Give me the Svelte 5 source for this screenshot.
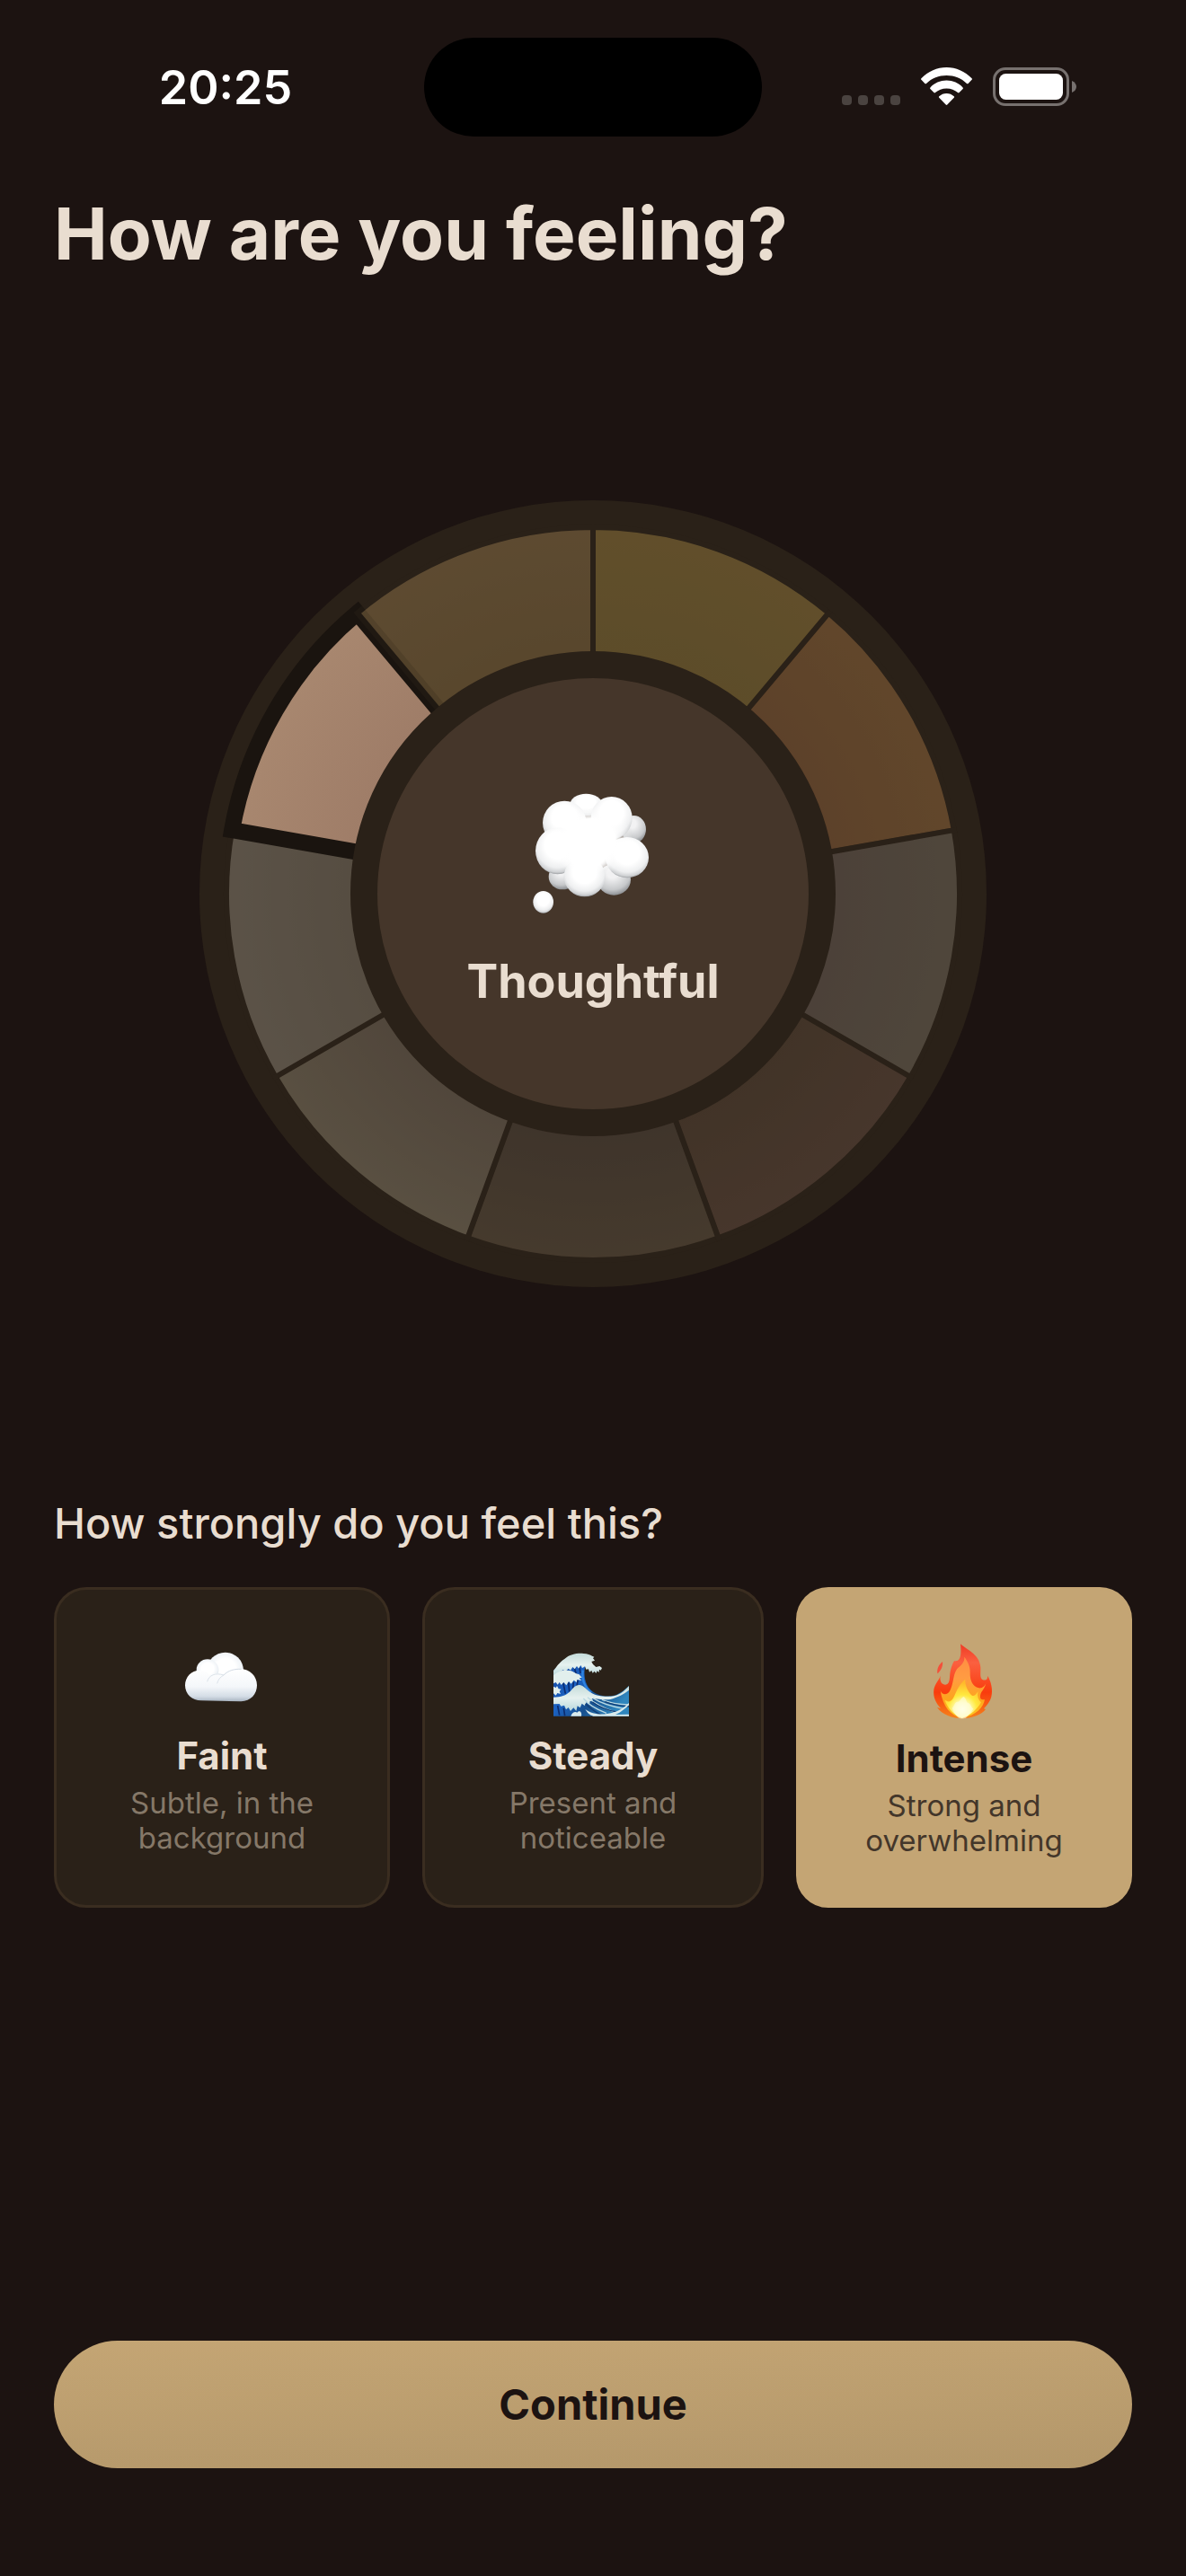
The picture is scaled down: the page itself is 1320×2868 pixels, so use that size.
<script lang="ts">
  type Point = { x: number; y: number };
  type Segment = { name: string; inner: string; outer: string };

  const CENTER = 438;
  const OUTER_RADIUS = 408;
  const INNER_RADIUS = 255;
  const SWEEP = 40;

  const segments: Segment[] = [
    { name: 'joyful', inner: '#a98e44', outer: '#b49348' },
    { name: 'excited', inner: '#aa7346', outer: '#b47f48' },
    { name: 'anxious', inner: '#7f726b', outer: '#877f70' },
    { name: 'angry', inner: '#65503f', outer: '#73574a' },
    { name: 'sad', inner: '#5f5248', outer: '#70614e' },
    { name: 'tired', inner: '#8c7f71', outer: '#a09680' },
    { name: 'calm', inner: '#988f80', outer: '#a59d8f' },
    { name: 'thoughtful', inner: '#9f7d68', outer: '#a8876f' },
    { name: 'grateful', inner: '#9f804d', outer: '#aa8957' }
  ];
  const selectedMood = 'thoughtful';

  const options = [
    { id: 'faint', title: 'Faint', lines: ['Subtle, in the', 'background'] },
    { id: 'steady', title: 'Steady', lines: ['Present and', 'noticeable'] },
    { id: 'intense', title: 'Intense', lines: ['Strong and', 'overwhelming'] }
  ];
  let strength = $state('intense');

  function polar(radius: number, degrees: number): Point {
    const a = (degrees * Math.PI) / 180;
    return { x: CENTER + radius * Math.sin(a), y: CENTER - radius * Math.cos(a) };
  }

  function wedge(index: number): string {
    const a = polar(INNER_RADIUS, index * SWEEP);
    const b = polar(OUTER_RADIUS, index * SWEEP);
    const c = polar(OUTER_RADIUS, (index + 1) * SWEEP);
    const d = polar(INNER_RADIUS, (index + 1) * SWEEP);
    return `M${a.x} ${a.y} L${b.x} ${b.y} A${OUTER_RADIUS} ${OUTER_RADIUS} 0 0 1 ${c.x} ${c.y} L${d.x} ${d.y} A${INNER_RADIUS} ${INNER_RADIUS} 0 0 0 ${a.x} ${a.y}Z`;
  }
</script>

<div class="screen">
  <header class="status">
    <time class="clock">20:25</time>
    <div class="island"></div>
    <div class="indicators">
      <div class="cell" aria-label="No signal"><i></i><i></i><i></i><i></i></div>
      <svg class="wifi" viewBox="0 0 57 44" aria-label="Wi-Fi">
        <path d="M0.4 12.2C8 4.6 18 0 28.5 0S49 4.6 56.6 12.2Q57.4 13 56.6 13.8L52.6 17.9Q51.8 18.7 51 17.9C45 12.2 37 9 28.5 9S12 12.2 6 17.9Q5.2 18.7 4.4 17.9L0.4 13.8Q-0.4 13 0.4 12.2Z" />
        <path d="M10.4 22.4C15 17.6 21.5 14.6 28.5 14.6S42 17.6 46.6 22.4Q47.4 23.2 46.6 24L42.6 28.1Q41.8 28.9 41 28.1C37.7 25.1 33.4 23.4 28.5 23.4S19.3 25.1 16 28.1Q15.2 28.9 14.4 28.1L10.4 24Q9.6 23.2 10.4 22.4Z" />
        <path d="M20.2 32.2C22.5 30.1 25.3 28.9 28.5 28.9S34.5 30.1 36.8 32.2Q37.6 33 36.8 33.8L29.3 41.5Q28.5 42.3 27.7 41.5L20.2 33.8Q19.4 33 20.2 32.2Z" />
      </svg>
      <svg class="battery" viewBox="0 0 93 44" aria-label="Battery full">
        <rect class="shell" x="1.5" y="1.5" width="82" height="40" rx="12.5" />
        <rect class="level" x="7" y="7" width="71" height="29" rx="7.5" />
        <path class="tip" d="M88 15C91.5 16.5 93 19 93 21.5S91.5 26.5 88 28Z" />
      </svg>
    </div>
  </header>

  <main>
    <h1>How are you feeling?</h1>

    <section class="wheel" aria-label="Mood wheel">
      <svg class="ring" viewBox="0 0 876 876" aria-hidden="true">
        <defs>
          {#each segments as s}
            <radialGradient id={s.name} gradientUnits="userSpaceOnUse" cx="438" cy="438" r="405">
              <stop offset="0.66" stop-color={s.inner} />
              <stop offset="1" stop-color={s.outer} />
            </radialGradient>
          {/each}
        </defs>
        <circle class="plate" cx="438" cy="438" r="438" />
        {#each segments as s, i}
          <path
            class="segment"
            class:selected={s.name === selectedMood}
            d={wedge(i)}
            fill="url(#{s.name})"
          />
        {/each}
        <circle class="hub" cx="438" cy="438" r="255" />
      </svg>

      <div class="mood">
        <svg class="thought" viewBox="0 0 600 540" aria-hidden="true">
          <defs>
            <radialGradient id="puff" cx="0.5" cy="0.38" r="0.64">
              <stop offset="0.45" stop-color="#ffffff" />
              <stop offset="0.75" stop-color="#eeeff0" />
              <stop offset="0.9" stop-color="#cfd1d3" />
              <stop offset="1" stop-color="#84878b" />
            </radialGradient>
            <radialGradient id="puff-back" cx="0.45" cy="0.3" r="0.75">
              <stop offset="0.2" stop-color="#f2f2f3" />
              <stop offset="0.7" stop-color="#c6c8ca" />
              <stop offset="1" stop-color="#7d8084" />
            </radialGradient>
            <radialGradient id="puff-core">
              <stop offset="0.6" stop-color="#ffffff" />
              <stop offset="1" stop-color="#ffffff" stop-opacity="0" />
            </radialGradient>
          </defs>
          <ellipse cx="277" cy="108" rx="54" ry="37" fill="url(#puff)" />
          <ellipse cx="436" cy="190" rx="41" ry="46" fill="url(#puff-back)" />
          <ellipse cx="198" cy="348" rx="46" ry="43" fill="url(#puff-back)" />
          <ellipse cx="370" cy="358" rx="56" ry="52" fill="url(#puff-back)" />
          <ellipse cx="205" cy="168" rx="73" ry="73" fill="url(#puff)" />
          <ellipse cx="362" cy="152" rx="69" ry="71" fill="url(#puff)" />
          <ellipse cx="182" cy="262" rx="74" ry="78" fill="url(#puff)" />
          <ellipse cx="414" cy="284" rx="72" ry="68" fill="url(#puff)" />
          <ellipse cx="290" cy="228" rx="142" ry="122" fill="url(#puff-core)" />
          <ellipse cx="272" cy="348" rx="69" ry="67" fill="url(#puff)" />
          <ellipse cx="280" cy="284" rx="92" ry="58" fill="url(#puff-core)" />
          <ellipse cx="134" cy="433" rx="34" ry="37" fill="url(#puff)" />
        </svg>
        <p>Thoughtful</p>
      </div>
    </section>

    <h2>How strongly do you feel this?</h2>

    <div class="options">
      {#each options as o}
        <button
          type="button"
          class="option"
          class:active={strength === o.id}
          aria-pressed={strength === o.id}
          onclick={() => (strength = o.id)}
        >
          {#if o.id === 'faint'}
            <svg class="emoji" viewBox="57 76 288 282" aria-hidden="true">
              <defs>
                <radialGradient id="cloud-puff" cx="0.5" cy="0.45" r="0.56">
                  <stop offset="0.5" stop-color="#ffffff" />
                  <stop offset="0.85" stop-color="#eef2f6" />
                  <stop offset="1" stop-color="#c3cfda" />
                </radialGradient>
                <linearGradient id="cloud-base" x1="0" y1="0" x2="0" y2="1">
                  <stop offset="0" stop-color="#ffffff" />
                  <stop offset="0.55" stop-color="#f4f7fa" />
                  <stop offset="0.85" stop-color="#d3dce5" />
                  <stop offset="1" stop-color="#a7b3c0" />
                </linearGradient>
              </defs>
              <circle cx="212" cy="181" r="61" fill="url(#cloud-puff)" />
              <ellipse cx="153" cy="178" rx="37" ry="35" fill="url(#cloud-puff)" />
              <path d="M78 230C78 202 99 180 127 180C142 180 152 184 160 196C178 188 196 190 207 196C222 180 243 175 262 175C295 176 318 199 318 230C318 259 297 284 265 284L132 281C101 281 78 259 78 230Z" fill="url(#cloud-base)" />
              <path d="M152 218C157 196 180 187 207 196C195 202 188 212 185 224" fill="none" stroke="#dbe2e9" stroke-width="3" />
              <path d="M207 196C222 180 243 175 266 176" fill="none" stroke="#d3dbe4" stroke-width="3" />
            </svg>
          {:else if o.id === 'steady'}
            <svg class="emoji" viewBox="66 46 288 282" aria-hidden="true">
              <defs>
                <linearGradient id="sea" x1="0" y1="0" x2="1" y2="0.6">
                  <stop offset="0" stop-color="#123f96" />
                  <stop offset="0.4" stop-color="#1c62c2" />
                  <stop offset="0.7" stop-color="#17508f" />
                  <stop offset="1" stop-color="#2f86bd" />
                </linearGradient>
                <linearGradient id="foam" x1="0" y1="0" x2="0" y2="1">
                  <stop offset="0" stop-color="#c4dbd9" />
                  <stop offset="0.5" stop-color="#e6f1ef" />
                  <stop offset="1" stop-color="#b9d8dc" />
                </linearGradient>
              </defs>
              <path d="M78 150L120 118L186 128C178 155 180 185 195 207C214 230 240 238 270 236C296 233 314 216 330 201V303H78Z" fill="url(#sea)" />
              <path d="M110 190L118 228M128 190L131 222M145 188L143 214M160 182L156 202M148 142L154 164M165 140L168 160M92 268L98 300M112 276L116 302" fill="none" stroke="#0b2c70" stroke-width="5" />
              <path d="M176 150C172 178 182 206 204 224" fill="none" stroke="#2d83e0" stroke-width="7" />
              <path d="M78 151C88 140 96 124 115 112C132 97 157 92 178 94C192 94 201 99 207 102L214 105L210 110L216 117L205 121L210 130L220 139L232 136L240 142L236 150L231 147L230 157L224 152L220 160L215 153L209 159L205 151L198 156L195 146L187 147L183 137L174 143L169 133L162 144L156 136L149 146L142 139L135 150L128 144L118 154L110 148L96 160L78 170Z" fill="url(#foam)" />
              <path d="M78 167C94 151 116 146 132 151C146 153 150 162 163 163L173 174L164 176L172 184L157 181L155 190L146 183L137 195L129 187L121 200L112 190L104 199L98 190L92 198L86 190L78 194Z" fill="#e2efed" />
              <path d="M78 204L86 208L90 202L95 212L104 213L98 220L102 229L91 226L86 234L78 227Z" fill="#e2efed" />
              <path d="M78 240C104 238 119 235 135 219C145 205 156 197 166 199C181 202 187 214 202 224C222 237 245 238 270 237C296 236 314 220 330 203V216C308 233 290 240 268 247C240 250 219 242 205 244C214 250 208 256 200 252L198 264L188 256L182 268L173 261L167 275L158 269L154 286L145 275L135 286L128 274L120 281L114 267L103 270L98 262L78 263Z" fill="url(#foam)" />
              <path d="M178 244C197 268 223 281 255 293M192 240C220 265 250 278 289 292M210 243C242 263 278 272 312 278M240 248C270 260 300 264 329 265" fill="none" stroke="#b9d8e2" stroke-width="4" />
              <path d="M185 262C204 280 218 290 238 299M208 256C235 276 260 284 290 289M250 255C278 266 302 269 330 271" fill="none" stroke="#123d76" stroke-width="4" />
              <path d="M330 259C313 276 292 290 257 295C234 299 205 296 184 280C191 291 197 299 211 303H330V297L285 298C304 290 320 276 330 265Z" fill="#d9eaec" />
              <path d="M136 303C139 292 150 286 157 291C166 280 174 291 171 303Z" fill="#d9eaec" />
            </svg>
          {:else}
            <svg class="emoji tall" viewBox="495 247 288 300" aria-hidden="true">
              <defs>
                <linearGradient id="flame" x1="0" y1="0" x2="0" y2="1">
                  <stop offset="0" stop-color="#ef3b25" />
                  <stop offset="0.25" stop-color="#fb6040" />
                  <stop offset="0.65" stop-color="#f93c0d" />
                  <stop offset="1" stop-color="#f5831b" />
                </linearGradient>
                <linearGradient id="flame-mid" x1="0" y1="0" x2="0" y2="1">
                  <stop offset="0" stop-color="#ff8d42" />
                  <stop offset="0.35" stop-color="#ff9c42" />
                  <stop offset="0.7" stop-color="#fda41c" />
                  <stop offset="1" stop-color="#ffcb22" />
                </linearGradient>
                <radialGradient id="flame-core" gradientUnits="userSpaceOnUse" cx="634" cy="490" r="88">
                  <stop offset="0" stop-color="#fffff2" />
                  <stop offset="0.25" stop-color="#fffcc0" />
                  <stop offset="0.55" stop-color="#ffe93e" />
                  <stop offset="1" stop-color="#ffb92b" />
                </radialGradient>
              </defs>
              <path d="M567 331C569 345 563 360 550 371C548 355 553 343 567 331Z" fill="#f4503a" />
              <path d="M627 272C642 288 692 306 694 350C695 370 690 387 702 392C712 395 719 389 717 378C729 395 736 425 730 448C725 467 714 478 705 488L711 490C700 507 665 521 632 521C600 521 565 507 549 484L561 487C545 470 535 450 538 425C541 405 556 392 560 378C557 397 565 408 577 408C597 405 587 378 596 352C600 340 603 333 606 329C622 331 632 322 627 272Z" fill="url(#flame)" />
              <path d="M640 315C650 330 660 344 659 368C658 393 668 415 688 419C700 421 708 413 712 404C708 424 692 432 693 450C694 458 701 458 708 458C704 482 681 511 632 519C595 513 568 482 560 428C566 444 584 443 592 428C605 402 601 378 615 356C627 343 642 335 640 315Z" fill="url(#flame-mid)" />
              <path d="M643 390C642 410 650 427 662 441C672 452 680 438 686 430C681 450 690 461 696 467C684 489 662 509 632 520C606 510 583 487 574 458C585 468 594 466 602 454C612 438 617 411 643 390Z" fill="url(#flame-core)" />
              <path d="M599 486C606 482 607 464 617 465C627 467 624 454 638 448C648 456 645 466 652 469C662 470 661 484 670 488C662 502 651 514 645 519C637 522 628 522 621 519C613 512 604 501 599 486Z" fill="#fffde0" opacity="0.6" />
            </svg>
          {/if}
          <span class="name">{o.title}</span>
          <span class="detail">{o.lines[0]}<br />{o.lines[1]}</span>
        </button>
      {/each}
    </div>

    <button type="button" class="continue">Continue</button>
  </main>
</div>

<style>
  :global(body) {
    margin: 0;
    background: #1c1311;
  }

  .screen {
    min-height: 100vh;
    box-sizing: border-box;
    display: flex;
    flex-direction: column;
    background: #1c1311;
    color: #e9ddd0;
    font-family: Inter, 'Liberation Sans', sans-serif;
  }

  .status {
    display: grid;
    grid-template-columns: 1fr 376px 1fr;
    align-items: center;
    padding-top: 42px;
    color: #fff;
  }

  .clock {
    padding: 2px 0 0 30px;
    text-align: center;
    font-size: 52px;
    line-height: 60px;
    font-weight: 600;
  }

  .island {
    height: 110px;
    border-radius: 55px;
    background: #000;
  }

  .indicators {
    display: flex;
    justify-content: center;
    align-items: flex-end;
    gap: 23px;
    padding-right: 34px;
  }

  .cell {
    display: flex;
    gap: 7px;
    padding-bottom: 2px;
  }

  .cell i {
    width: 11px;
    height: 11px;
    border-radius: 4px;
    background: #4a4340;
  }

  .wifi {
    width: 57px;
    height: 44px;
    fill: #fff;
  }

  .battery {
    width: 93px;
    height: 44px;
  }

  .shell {
    fill: none;
    stroke: #77716f;
    stroke-width: 3px;
  }

  .level {
    fill: #fff;
  }

  .tip {
    fill: #77716f;
  }

  main {
    flex: 1;
    display: flex;
    flex-direction: column;
    padding: 58px 60px 120px;
  }

  h1 {
    margin: 0;
    font-size: 80px;
    line-height: 100px;
    font-weight: 700;
  }

  .wheel {
    display: grid;
    place-items: center;
    margin: 247px 0 233px;
  }

  .ring,
  .mood {
    grid-area: 1 / 1;
  }

  .ring {
    width: 100%;
    max-width: 876px;
    display: block;
  }

  .plate {
    fill: #2a2118;
  }

  .segment {
    stroke: #2a2118;
    stroke-width: 6px;
    opacity: 0.4;
  }

  .segment.selected {
    stroke: #1a140f;
    stroke-width: 18px;
    opacity: 1;
  }

  .hub {
    fill: #45362a;
    stroke: #2a2118;
    stroke-width: 30px;
  }

  .mood {
    display: flex;
    flex-direction: column;
    align-items: center;
    gap: 16px;
  }

  .thought {
    width: 200px;
    height: 180px;
  }

  .mood p {
    margin: 0;
    font-size: 52px;
    line-height: 74px;
    font-weight: 700;
  }

  h2 {
    margin: 0 0 41px;
    font-size: 47px;
    line-height: 60px;
    font-weight: 500;
  }

  .options {
    display: grid;
    grid-template-columns: 187fr 190fr 187fr;
    gap: 36px;
  }

  .option {
    min-height: 357px;
    display: flex;
    flex-direction: column;
    align-items: center;
    justify-content: center;
    padding: 48px 24px;
    border: 3px solid #3a2d20;
    border-radius: 36px;
    background: #2a2118;
    color: #e9ddd0;
    font: inherit;
    text-align: center;
  }

  .option.active {
    border-color: #c4a574;
    background: #c4a574;
    color: #1c1311;
  }

  .emoji {
    width: 96px;
    height: 94px;
    margin-bottom: 11px;
  }

  .emoji.tall {
    height: 100px;
  }

  .name {
    margin-bottom: 8px;
    font-size: 42px;
    line-height: 50px;
    font-weight: 700;
  }

  .detail {
    color: #857868;
    font-size: 33px;
    line-height: 39px;
  }

  .active .detail {
    color: #43362a;
  }

  .continue {
    min-height: 142px;
    margin-top: auto;
    border: 0;
    border-radius: 71px;
    background: linear-gradient(178deg, #c4a574, #b3976a);
    color: #1c1311;
    font: inherit;
    font-size: 47px;
    line-height: 60px;
    font-weight: 700;
  }
</style>
